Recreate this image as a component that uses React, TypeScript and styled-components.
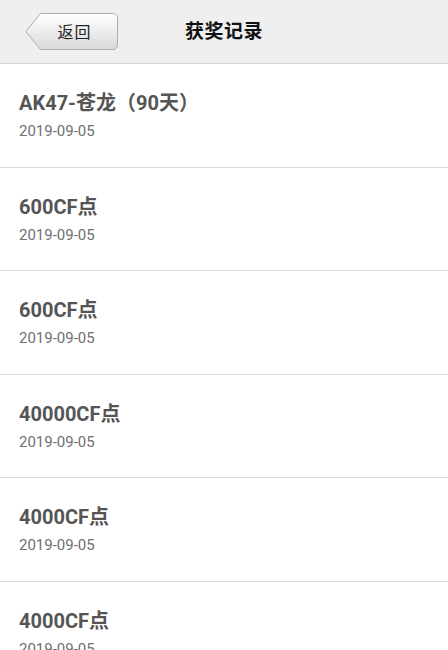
import React from "react";
import styled, { createGlobalStyle } from "styled-components";

const Global = createGlobalStyle`
  html, body { margin: 0; padding: 0; background: #ffffff; }
  body { font-family: "Roboto", "Noto Sans CJK SC", sans-serif; }
  * { box-sizing: border-box; }
`;

const Page = styled.div`
  width: 448px;
  height: 650px;
  overflow: hidden;
  background: #ffffff;
`;

const Header = styled.header`
  height: 64px;
  background: #efefef;
  border-bottom: 1px solid #d4d4d4;
  display: grid;
  grid-template-columns: 1fr auto 1fr;
  align-items: center;
`;

const BackButton = styled.button`
  position: relative;
  width: 93px;
  height: 37px;
  margin: -1px 0 0 25px;
  padding: 0 0 0 6px;
  border: none;
  background: transparent;
  justify-self: start;
  display: flex;
  align-items: center;
  justify-content: center;
  font-family: "Noto Sans CJK SC", sans-serif;
  font-size: 16px;
  color: #222;
  cursor: pointer;
`;

const ButtonShape = styled.svg`
  position: absolute;
  left: 0;
  top: 0;
`;

const ButtonLabel = styled.span`
  position: relative;
  letter-spacing: 1px;
`;

const Title = styled.h1`
  margin: -4px 0 0;
  font-family: "Noto Sans CJK SC", sans-serif;
  font-size: 19px;
  font-weight: 700;
  color: #111;
  letter-spacing: 0.5px;
`;

const List = styled.ul`
  list-style: none;
  margin: 0;
  padding: 0;
`;

const Row = styled.li`
  height: 103.5px;
  border-bottom: 1px solid #dcdcdc;
  padding: 26px 19px 0;
  display: flex;
  flex-direction: column;
  gap: 5px;
`;

const ItemName = styled.div`
  font-family: "Roboto", "Noto Sans CJK SC", sans-serif;
  font-size: 20px;
  line-height: 26px;
  font-weight: 700;
  color: #555;
`;

const ItemDate = styled.div`
  font-family: "Roboto", sans-serif;
  font-size: 15px;
  line-height: 20px;
  color: #6f6f6f;
`;

const items = [
  { name: "AK47-苍龙（90天）", date: "2019-09-05" },
  { name: "600CF点", date: "2019-09-05" },
  { name: "600CF点", date: "2019-09-05" },
  { name: "40000CF点", date: "2019-09-05" },
  { name: "4000CF点", date: "2019-09-05" },
  { name: "4000CF点", date: "2019-09-05" },
];

export default function App() {
  return (
    <Page>
      <Global />
      <Header>
        <BackButton>
          <ButtonShape width="93" height="37" viewBox="0 0 93 37">
            <defs>
              <linearGradient id="bg" x1="0" y1="0" x2="0" y2="1">
                <stop offset="0" stopColor="#ffffff" />
                <stop offset="1" stopColor="#d9d9d9" />
              </linearGradient>
            </defs>
            <path
              d="M15.5 0.5 H88 a4.5 4.5 0 0 1 4.5 4.5 V32 a4.5 4.5 0 0 1 -4.5 4.5 H15.5 L0.8 18.5 Z"
              fill="url(#bg)"
              stroke="#acacac"
              strokeWidth="1"
            />
          </ButtonShape>
          <ButtonLabel>返回</ButtonLabel>
        </BackButton>
        <Title>获奖记录</Title>
        <span />
      </Header>
      <List>
        {items.map((it, i) => (
          <Row key={i}>
            <ItemName>{it.name}</ItemName>
            <ItemDate>{it.date}</ItemDate>
          </Row>
        ))}
      </List>
    </Page>
  );
}
